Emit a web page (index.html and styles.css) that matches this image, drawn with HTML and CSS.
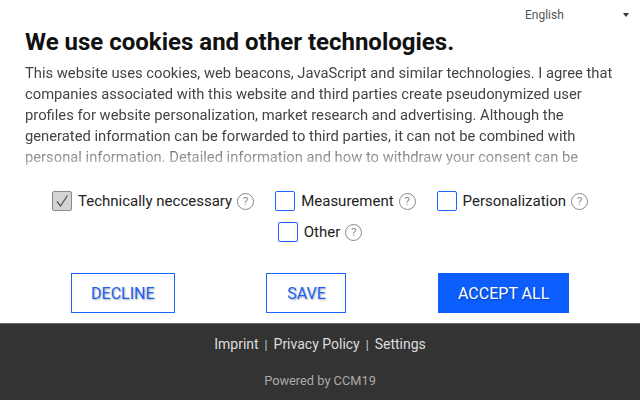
FILE: index.html
```html
<!DOCTYPE html>
<html>
<head>
<meta charset="utf-8">
<link rel="stylesheet" href="styles.css">
</head>
<body>
<div class="banner">
  <div class="lang-row">
    <div class="lang">English <span class="caret"></span></div>
  </div>
  <h1 class="title">We use cookies and other technologies.</h1>
  <p class="text">This website uses cookies, web beacons, JavaScript and similar technologies. I agree that companies associated with this website and third parties create pseudonymized user profiles for website personalization, market research and advertising. Although the generated information can be forwarded to third parties, it can not be combined with personal information. Detailed information and how to withdraw your consent can be found in our privacy policy.</p>
  <div class="options">
    <label class="opt"><span class="box checked"><svg viewBox="0 0 20 20" width="20" height="20"><path d="M5 10.5 L8.5 15 L15.5 4.5" fill="none" stroke="#555" stroke-width="1.3"/></svg></span><span class="name">Technically neccessary</span><span class="help">?</span></label>
    <label class="opt"><span class="box"></span><span class="name">Measurement</span><span class="help">?</span></label>
    <label class="opt"><span class="box"></span><span class="name">Personalization</span><span class="help">?</span></label>
    <label class="opt"><span class="box"></span><span class="name">Other</span><span class="help">?</span></label>
  </div>
  <div class="buttons">
    <button class="btn outline decline">DECLINE</button>
    <button class="btn outline save">SAVE</button>
    <button class="btn solid accept">ACCEPT ALL</button>
  </div>
</div>
<footer class="footer">
  <div class="links"><a>Imprint</a><span class="sep">|</span><a>Privacy Policy</a><span class="sep">|</span><a>Settings</a></div>
  <div class="powered">Powered by CCM19</div>
</footer>
</body>
</html>
```
FILE: styles.css
```css
html, body {
  margin: 0;
  padding: 0;
  background: #fff;
  font-family: Roboto, "Liberation Sans", sans-serif;
}
.banner {
  padding: 0 25px;
  height: 323px;
  box-sizing: border-box;
}
.lang-row {
  display: flex;
  justify-content: flex-end;
  height: 28px;
  padding-top: 1px;
  box-sizing: border-box;
  align-items: center;
}
.lang {
  width: 105px;
  margin-right: -15px;
  font-size: 12px;
  color: #555;
  display: flex;
  align-items: center;
  justify-content: space-between;
}
.caret {
  width: 0;
  height: 0;
  border-left: 3px solid transparent;
  border-right: 3px solid transparent;
  border-top: 4px solid #333;
  margin-right: 1px;
}
.title {
  margin: -1px 0 0;
  font-size: 24px;
  line-height: 30px;
  font-weight: 700;
  color: #111;
}
.text {
  margin: 6px 0 0;
  font-size: 14.75px;
  line-height: 21px;
  color: #444;
  height: 102px;
  overflow: hidden;
  -webkit-mask-image: linear-gradient(to bottom, #000 78%, rgba(0,0,0,0.35) 100%);
  mask-image: linear-gradient(to bottom, #000 78%, rgba(0,0,0,0.35) 100%);
}
.options {
  display: flex;
  flex-wrap: wrap;
  justify-content: center;
  column-gap: 21px;
  row-gap: 5px;
  margin-top: 23px;
}
.opt {
  display: flex;
  align-items: center;
  height: 26px;
  font-size: 15px;
  color: #222;
}
.box {
  width: 20px;
  height: 20px;
  box-sizing: border-box;
  border: 1.5px solid #1a66ff;
  border-radius: 2px;
  margin-right: 6px;
  display: flex;
}
.box.checked {
  background: #d4d4d4;
  border: 1px solid #8a8a8a;
}
.box svg { display: block; margin: -1px; }
.help {
  width: 15px;
  height: 15px;
  border: 1px solid #888;
  border-radius: 50%;
  font-size: 11px;
  line-height: 15px;
  text-align: center;
  color: #888;
  margin-left: 5px;
}
.buttons {
  display: flex;
  justify-content: space-around;
  margin-top: 28px;
}
.btn {
  height: 40px;
  font-family: Roboto, "Liberation Sans", sans-serif;
  font-size: 16px;
  box-sizing: border-box;
  padding: 0;
  cursor: pointer;
}
.outline {
  background: #fff;
  color: #1a62f5;
  border: 1px solid #1565ff;
  text-shadow: 1px 1px 2px rgba(0,0,0,0.35);
}
.decline { width: 104px; }
.save { width: 80px; }
.accept {
  width: 131px;
  background: #0c5eff;
  color: #fff;
  border: none;
  text-shadow: 1px 1px 2px rgba(0,0,0,0.35);
}
.footer {
  height: 77px;
  background: #333;
  border-top: 1px solid #666;
  box-sizing: border-box;
  text-align: center;
  padding-top: 10px;
}
.links {
  font-size: 14px;
  line-height: 20px;
  color: #ddd;
}
.links a { color: #ddd; }
.sep {
  margin: 0 6px;
  font-size: 12px;
  color: #ccc;
}
.powered {
  margin-top: 18px;
  font-size: 12.8px;
  line-height: 16px;
  color: #aaa;
}
```
